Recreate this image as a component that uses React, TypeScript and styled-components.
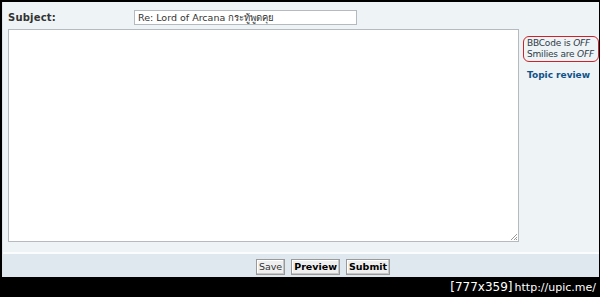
import React from "react";
import styled, { createGlobalStyle } from "styled-components";

const Global = createGlobalStyle`
  html, body {
    margin: 0;
    padding: 0;
    background: #000;
  }
  body {
    font-family: "DejaVu Sans", Verdana, sans-serif;
  }
`;

const Frame = styled.div`
  width: 600px;
  height: 297px;
  background: #000;
  box-sizing: border-box;
  padding: 2px 1px 0 2px;
  display: flex;
  flex-direction: column;
  overflow: hidden;
`;

const Panel = styled.div`
  flex: 1;
  background: #eef3f6;
  display: flex;
  flex-direction: column;
  border-left: 1px solid #dfe4e8;
  overflow: hidden;
`;

const Body = styled.div`
  flex: 1;
  padding: 8px 0 0 5px;
`;

const SubjectRow = styled.div`
  display: flex;
  align-items: center;
  height: 15px;
`;

const Label = styled.div`
  width: 126px;
  font-size: 10px;
  font-weight: bold;
  color: #333;
  letter-spacing: 0.2px;
`;

const SubjectInput = styled.div`
  width: 218px;
  height: 13px;
  background: #fff;
  border: 1px solid #b4bac0;
  font-size: 9.5px;
  line-height: 13px;
  padding-left: 3px;
  color: #333;
  white-space: nowrap;
  overflow: hidden;
`;

const Content = styled.div`
  display: flex;
  margin-top: 4px;
`;

const TextArea = styled.div`
  position: relative;
  flex: none;
  width: 509px;
  height: 211px;
  background: #fff;
  border: 1px solid #b4bac0;
`;

const Grip = styled.svg`
  position: absolute;
  right: 0;
  bottom: 0;
`;

const Side = styled.div`
  padding: 7px 0 0 4px;
  display: flex;
  flex-direction: column;
  white-space: nowrap;
`;

const Status = styled.div`
  border: 1.5px solid #d0202a;
  border-radius: 6px;
  padding: 1px 4px 1px 3px;
  font-size: 9px;
  line-height: 11px;
  color: #2f3b46;
  letter-spacing: -0.2px;
  i {
    font-style: italic;
  }
`;

const Review = styled.div`
  margin: 8px 0 0 4px;
  font-size: 9px;
  font-weight: bold;
  color: #105289;
`;

const ButtonBar = styled.div`
  height: 25px;
  border-top: 2px solid #fbfcfd;
  margin-top: 8px;
  background: #dfe7ef;
  display: flex;
  justify-content: center;
  align-items: flex-end;
  padding-bottom: 2px;
  gap: 6px;
  box-sizing: border-box;
  padding-left: 44px;
`;

const Button = styled.div<{ $bold?: boolean }>`
  height: 14px;
  padding: 0 2px;
  background: #efefef;
  border: 1px solid #9a9a9a;
  box-shadow: inset -1px -1px 0 #c6c6c6, inset 1px 1px 0 #fff;
  font-size: 9.5px;
  line-height: 14px;
  font-weight: ${(p) => (p.$bold ? "bold" : "normal")};
  color: ${(p) => (p.$bold ? "#000" : "#333")};
`;

const Footer = styled.div`
  height: 20px;
  background: #000;
  color: #fff;
  display: flex;
  justify-content: flex-end;
  align-items: center;
  font-family: "DejaVu Sans", sans-serif;
  font-size: 12px;
  padding-right: 3px;
  span {
    font-size: 11px;
    margin-left: 2px;
  }
`;

const App = () => (
  <Frame>
    <Global />
    <Panel>
      <Body>
        <SubjectRow>
          <Label>Subject:</Label>
          <SubjectInput>Re: Lord of Arcana กระทู้พูดคุย</SubjectInput>
        </SubjectRow>
        <Content>
          <TextArea>
            <Grip width="8" height="8" viewBox="0 0 8 8">
              <path d="M7 1L1 7M7 4L4 7M7 6L6 7" stroke="#999" strokeWidth="1" />
            </Grip>
          </TextArea>
          <Side>
            <Status>
              BBCode is <i>OFF</i>
              <br />
              Smilies are <i>OFF</i>
            </Status>
            <Review>Topic review</Review>
          </Side>
        </Content>
      </Body>
      <ButtonBar>
        <Button>Save</Button>
        <Button $bold>Preview</Button>
        <Button $bold>Submit</Button>
      </ButtonBar>
    </Panel>
    <Footer>
      [777x359]<span>http://upic.me/</span>
    </Footer>
  </Frame>
);

export default App;
